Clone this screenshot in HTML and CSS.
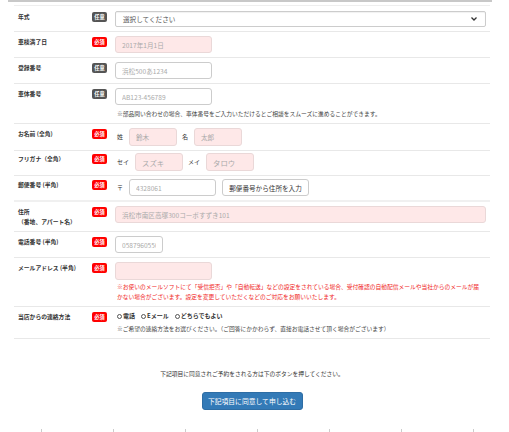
FILE: index.html
```html
<!DOCTYPE html>
<html lang="ja">
<head>
  <meta charset="UTF-8">
  <title>ご予約フォーム</title>
  <link rel="stylesheet" href="styles.css">
</head>
<body>
  <div class="topbar"></div>

  <div class="form">
    <div class="row r-first">
      <div class="label">年式</div>
      <div class="badge-cell"><span class="badge any">任意</span></div>
      <div class="field">
        <div class="select">
          <span>選択してください</span>
          <svg width="6" height="4" viewBox="0 0 6 4"><path d="M0.5 0.5 L3 3 L5.5 0.5" fill="none" stroke="#333" stroke-width="1.3"/></svg>
        </div>
      </div>
    </div>

    <div class="row">
      <div class="label">車検満了日</div>
      <div class="badge-cell"><span class="badge req">必須</span></div>
      <div class="field">
        <input class="input req w97" type="text" placeholder="2017年1月1日">
      </div>
    </div>

    <div class="row">
      <div class="label">登録番号</div>
      <div class="badge-cell"><span class="badge any">任意</span></div>
      <div class="field">
        <input class="input w97" type="text" placeholder="浜松500あ1234">
      </div>
    </div>

    <div class="row">
      <div class="label">車体番号</div>
      <div class="badge-cell"><span class="badge any">任意</span></div>
      <div class="field">
        <input class="input w97" type="text" placeholder="AB123-456789">
        <p class="note">※部品問い合わせの場合、車体番号をご入力いただけるとご相談をスムーズに進めることができます。</p>
      </div>
    </div>

    <div class="row">
      <div class="label">お名前 (全角)</div>
      <div class="badge-cell"><span class="badge req">必須</span></div>
      <div class="field inline">
        <span class="prefix">姓</span>
        <input class="input req w48 tall" type="text" placeholder="鈴木">
        <span class="prefix">名</span>
        <input class="input req w48 tall" type="text" placeholder="太郎">
      </div>
    </div>

    <div class="row r-kana">
      <div class="label">フリガナ（全角）</div>
      <div class="badge-cell"><span class="badge req">必須</span></div>
      <div class="field inline">
        <span class="prefix">セイ</span>
        <input class="input req w48 tall kana" type="text" placeholder="スズキ">
        <span class="prefix">メイ</span>
        <input class="input req w48 tall kana" type="text" placeholder="タロウ">
      </div>
    </div>

    <div class="row r-zip">
      <div class="label">郵便番号 (半角)</div>
      <div class="badge-cell"><span class="badge req">必須</span></div>
      <div class="field inline">
        <span class="prefix">〒</span>
        <input class="input w87" type="text" placeholder="4328061">
        <button class="zip-btn" type="button">郵便番号から住所を入力</button>
      </div>
    </div>

    <div class="row">
      <div class="label">住所<br>（番地、アパート名）</div>
      <div class="badge-cell"><span class="badge req">必須</span></div>
      <div class="field">
        <input class="input req full" type="text" placeholder="浜松市南区高塚300コーポすずき101">
      </div>
    </div>

    <div class="row">
      <div class="label">電話番号 (半角)</div>
      <div class="badge-cell"><span class="badge req">必須</span></div>
      <div class="field">
        <input class="input w48" type="text" placeholder="0587960550">
      </div>
    </div>

    <div class="row">
      <div class="label">メールアドレス (半角)</div>
      <div class="badge-cell"><span class="badge req">必須</span></div>
      <div class="field">
        <input class="input req w97 tall" type="text">
        <p class="note red">※お使いのメールソフトにて「受信拒否」や「自動転送」などの設定をされている場合、受付確認の自動配信メールや当社からのメールが届かない場合がございます。設定を変更していただくなどのご対応をお願いいたします。</p>
      </div>
    </div>

    <div class="row">
      <div class="label">当店からの連絡方法</div>
      <div class="badge-cell"><span class="badge req">必須</span></div>
      <div class="field">
        <div class="radios">
          <label><span class="radio"></span>電話</label>
          <label><span class="radio"></span>Eメール</label>
          <label><span class="radio"></span>どちらでもよい</label>
        </div>
        <p class="note">※ご希望の連絡方法をお選びください。（ご回答にかかわらず、直接お電話させて頂く場合がございます）</p>
      </div>
    </div>
  </div>

  <div class="agree">
    <p>下記項目に同意されご予約をされる方は下のボタンを押してください。</p>
    <button class="submit" type="button">下記項目に同意して申し込む</button>
  </div>

  <div class="calendar">
    <span></span><span></span><span></span><span></span><span></span><span></span><span></span>
  </div>
</body>
</html>
```

FILE: styles.css
```css
html {
  overflow: hidden;
}
body {
  margin: 0;
  font-family: "Noto Sans CJK JP", "Noto Sans", sans-serif;
  color: #333;
  background-color: #fff;
}
.topbar {
  width: 484px;
  height: 2px;
  margin-left: 8px;
  background-color: #c8c8c8;
}
.form {
  width: 476px;
  margin: 3px 0 0 14px;
  border-top: 1px solid #eee;
}
.row {
  display: grid;
  grid-template-columns: 78px 23px 1fr;
  align-items: start;
  padding: 4px 4px 4px 0;
  border-bottom: 1px solid #e8e8e8;
}
.r-first {
  padding: 5px 4px 4px 0;
}
.r-kana {
  padding-top: 2px;
}
.r-zip {
  padding-top: 3px;
  border-bottom: 2px solid #f0f0f0;
}
.label {
  padding: 1px 0 0 4px;
  font-size: 5.8px;
  font-weight: bold;
  line-height: 10px;
}
.badge-cell {
  display: flex;
  align-items: flex-start;
  line-height: 0;
}
.badge {
  display: block;
  width: 15px;
  height: 10px;
  margin-top: 1px;
  border-radius: 2px;
  color: #fff;
  font-size: 5.2px;
  font-weight: bold;
  line-height: 10px;
  text-align: center;
}
.badge.any {
  background-color: #555;
}
.badge.req {
  background-color: #f00;
}
.field {
  min-width: 0;
  font-size: 6px;
  line-height: 10px;
}
.inline {
  display: flex;
  align-items: center;
}
.select {
  box-sizing: border-box;
  height: 16px;
  display: flex;
  align-items: center;
  justify-content: space-between;
  padding: 0 8px 0 7px;
  border: 1px solid #ccc;
  border-radius: 2px;
  box-shadow: inset 0 1px 1px rgba(0,0,0,0.06);
  font-size: 6.6px;
  color: #555;
}
.input {
  box-sizing: border-box;
  display: block;
  height: 17px;
  padding: 0 6px;
  border: 1px solid #ccc;
  border-radius: 3px;
  background-color: #fff;
  font-family: "Noto Sans CJK JP", "Noto Sans", sans-serif;
  font-size: 6.6px;
  color: #555;
  outline: none;
}
.input::placeholder {
  color: #aaa;
}
.input.req {
  background-color: #fee8e8;
  border-color: #ead8d8;
}
.input.tall {
  height: 18px;
}
.input.kana {
  font-size: 7.4px;
}
.w48 { width: 48px; }
.w87 { width: 87px; }
.w97 { width: 97px; }
.full { width: 100%; }
.prefix {
  margin: 0 6px 0 5px;
  font-size: 6px;
  line-height: 10px;
}
.prefix:first-child {
  margin-left: 2px;
}
.zip-btn {
  box-sizing: border-box;
  width: 87px;
  height: 17px;
  margin-left: 6px;
  padding: 0;
  border: 1px solid #ccc;
  border-radius: 3px;
  background-color: #fff;
  font-family: "Noto Sans CJK JP", "Noto Sans", sans-serif;
  font-size: 6.6px;
  color: #333;
}
.note {
  margin: 4px 0 0;
  padding-left: 2px;
  font-size: 5.75px;
  line-height: 10px;
  color: #444;
  white-space: nowrap;
}
.note.red {
  margin-top: 2px;
  padding-right: 4px;
  color: #f01e1e;
  white-space: normal;
}
.radios {
  display: flex;
  gap: 6px;
  padding-left: 2px;
  font-size: 6px;
  font-weight: bold;
  line-height: 10px;
}
.radios label {
  display: flex;
  align-items: center;
}
.radio {
  box-sizing: border-box;
  width: 5px;
  height: 5px;
  margin-right: 1px;
  border: 1px solid #555;
  border-radius: 50%;
}
.radios + .note {
  margin-top: 3px;
}
.agree {
  width: 476px;
  margin-left: 14px;
  text-align: center;
  line-height: 0;
}
.agree p {
  margin: 30px 0 0;
  font-size: 5.75px;
  line-height: 10px;
}
.submit {
  box-sizing: border-box;
  width: 101px;
  height: 18px;
  margin-top: 13px;
  padding: 0;
  border: 1px solid #2e6da4;
  border-radius: 3px;
  background-color: #337ab7;
  color: #fff;
  font-family: "Noto Sans CJK JP", "Noto Sans", sans-serif;
  font-size: 6.8px;
  line-height: 16px;
}
.calendar {
  display: flex;
  width: 468px;
  height: 6px;
  margin: 19px 0 0 41px;
  overflow: hidden;
}
.calendar span {
  flex: none;
  box-sizing: border-box;
  width: 72px;
  border-left: 1px solid #ccc;
}
```
